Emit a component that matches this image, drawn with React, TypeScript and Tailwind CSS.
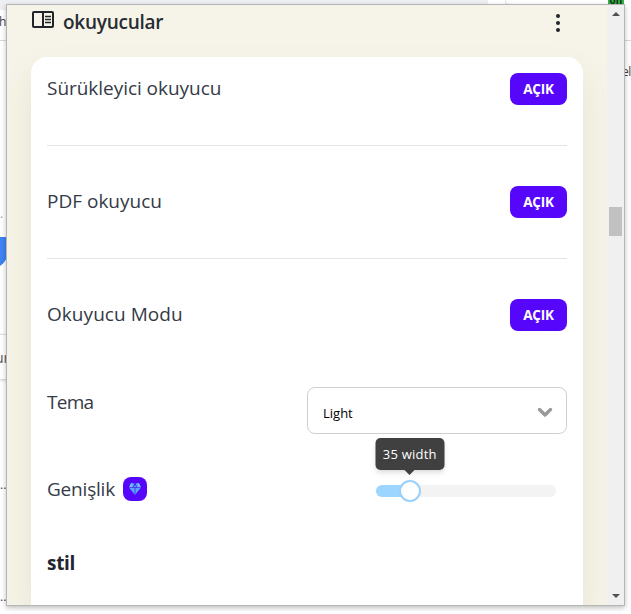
import React, { useState } from "react";

interface Reader {
  id: string;
  label: string;
  labelClass: string;
  rowClass: string;
}

const readers: Reader[] = [
  {
    id: "immersive",
    label: "Sürükleyici okuyucu",
    labelClass: "tracking-[-0.04px]",
    rowClass: "pb-10",
  },
  {
    id: "pdf",
    label: "PDF okuyucu",
    labelClass: "tracking-[0px]",
    rowClass: "py-10",
  },
  {
    id: "mode",
    label: "Okuyucu Modu",
    labelClass: "tracking-[0.05px]",
    rowClass: "pt-10",
  },
];

const MIN_WIDTH = 20;
const MAX_WIDTH = 100;

const ReaderIcon: React.FC = () => (
  <svg width="22" height="17" viewBox="0 0 22 17" fill="none" stroke="#212529">
    <rect x="1" y="1" width="20" height="15" rx="1" strokeWidth="2" />
    <path d="M11 1v15" strokeWidth="2" />
    <path d="M13 5.5h6M13 8.5h6M13 11.5h6" strokeWidth="1.4" />
  </svg>
);

const GemIcon: React.FC = () => (
  <svg width="12" height="12" viewBox="0 0 12 12">
    <path d="M2.2 0h7.6L12 4.4 6 12 0 4.4z" fill="#58a6f8" />
    <path d="M2.2 0L4 4.4H0zM9.8 0L8 4.4h4z" fill="#82c4fb" />
    <path
      d="M0 4.4h12M4 4.4L6 .5l2 3.9M6 4.4V12"
      fill="none"
      stroke="#4424ee"
      strokeWidth="0.8"
    />
    <path d="M4.3 0h3.4L6 3.2z" fill="#4a2af0" />
  </svg>
);

const ToggleButton: React.FC = () => {
  const [enabled, setEnabled] = useState(true);

  return (
    <button
      type="button"
      onClick={() => setEnabled(!enabled)}
      className="h-8 w-[57px] rounded-lg bg-[#5607fb] text-[13.5px] font-bold tracking-[-0.2px] text-white"
    >
      {enabled ? "AÇIK" : "KAPALI"}
    </button>
  );
};

const WidthSlider: React.FC = () => {
  const value = 35;
  const percent = ((value - MIN_WIDTH) / (MAX_WIDTH - MIN_WIDTH)) * 100;

  return (
    <div className="relative mr-[11px] h-3 w-[180px] rounded-full bg-[#f3f3f3]">
      <div
        className="h-3 rounded-full bg-[#9cd5ff]"
        style={{ width: `${percent}%` }}
      />
      <div
        className="absolute top-1/2 size-[22px] -translate-x-1/2 -translate-y-1/2 rounded-full border-2 border-[#9bd0fa] bg-white"
        style={{ left: `${percent}%` }}
      />
      {/* value bubble above the handle */}
      <div
        className="absolute bottom-[27px] flex h-8 w-[69px] -translate-x-1/2 items-center justify-center rounded-[5px] bg-[#404040] pt-px text-[13px] tracking-[0.2px] whitespace-nowrap text-white shadow-md"
        style={{ left: `${percent}%` }}
      >
        {value} width
        <span className="absolute top-full border-x-[5px] border-t-[5px] border-x-transparent border-t-[#404040]" />
      </div>
    </div>
  );
};

// The web page that stays visible around the popup
const PageBehind: React.FC = () => (
  <div className="h-full bg-white text-[12px] text-[#444]">
    <div className="flex h-[10px]">
      <div className="w-[488px] bg-[#edeff2]" />
      <div className="ml-[17px] w-[100px] rounded-bl-lg border-b-[6px] border-l border-[#e3e5e8]" />
    </div>
    <div className="h-[31px] border-b border-[#d5d7da] pt-[2px] leading-5">
      <span className="-ml-[5px] tracking-[-0.5px]">/h</span>
    </div>
    <div className="flex h-[196px] justify-between pt-[22px] leading-5">
      <span className="pt-[141px] text-[#999]">.</span>
      <span className="-mt-px w-[9px] tracking-[-0.6px]">eli</span>
    </div>
    <svg width="8" height="30" viewBox="0 0 8 30">
      <path d="M0 0h8v18Q5 26 0 29z" fill="#3f82f2" />
    </svg>
    <div className="mt-[67px] h-[46px] w-3 border-y border-[#ddd] pt-[11px] leading-6 text-[#555] shadow-sm">
      <span className="-ml-[5px] text-[14px]">ur</span>
    </div>
    <div className="mt-[95px] leading-5">...</div>
    <div className="mt-[92px] leading-5">...</div>
  </div>
);

const App: React.FC = () => {
  return (
    <div className="relative h-[614px] w-[631px] overflow-hidden font-['Open_Sans','Noto_Sans',sans-serif]">
      <PageBehind />
      <span className="absolute top-0 right-[7px] h-[5px] w-4 bg-[#35b34a] text-center text-[10px] leading-[0px] font-bold text-[#15351b]">
        on
      </span>

      <div className="absolute top-1 left-[6px] flex h-[602px] w-[619px] border border-[#b5b5b5] bg-[#f6f4e8] shadow-[0_2px_5px_rgba(0,0,0,0.25)]">
        <main className="flex w-[600px] flex-col overflow-hidden px-6">
          <header className="flex h-[52px] shrink-0 items-start pt-[6px]">
            <span className="ml-[1px]">
              <ReaderIcon />
            </span>
            <h1 className="ml-[9px] text-[19px] leading-[23px] font-semibold tracking-[-0.25px] text-[#272d33]">
              okuyucular
            </h1>
            <button type="button" className="mt-[3px] mr-[23px] ml-auto flex flex-col gap-[3px]">
              <i className="size-1 rounded-full bg-[#212529]" />
              <i className="size-1 rounded-full bg-[#212529]" />
              <i className="size-1 rounded-full bg-[#212529]" />
            </button>
          </header>

          <section className="grow rounded-t-2xl bg-white px-4 pt-4 text-[19px] text-[#343a46] shadow-[0_16px_32px_rgba(100,90,40,0.1)]">
            <div className="divide-y divide-[#e3e4e6]">
              {readers.map(({ id, label, labelClass, rowClass }) => (
                <div key={id} className={`flex items-start justify-between ${rowClass}`}>
                  <span className={`leading-[30px] ${labelClass}`}>{label}</span>
                  <ToggleButton />
                </div>
              ))}
            </div>

            <div className="mt-14 flex items-start justify-between">
              <span className="leading-[30px] tracking-[-0.7px]">Tema</span>
              <button
                type="button"
                className="flex h-[47px] w-[260px] items-center justify-between rounded-lg border border-[#cfcfcf] pt-1 pr-[13px] pl-[15px] text-[13px] text-black"
              >
                <span className="pt-[2px]">Light</span>
                <svg width="16" height="11" viewBox="0 0 16 11" fill="none">
                  <path
                    d="M2.5 2.5L8 8l5.5-5.5"
                    stroke="#999"
                    strokeWidth="3.4"
                    strokeLinecap="round"
                    strokeLinejoin="round"
                  />
                </svg>
              </button>
            </div>

            <div className="mt-10 flex h-[34px] items-center justify-between">
              <div className="-mt-[5px] flex items-center gap-2">
                <span className="leading-[30px] tracking-[-0.2px]">Genişlik</span>
                <span className="flex size-6 items-center justify-center rounded-lg bg-[#5607fb]">
                  <GemIcon />
                </span>
              </div>
              <WidthSlider />
            </div>

            <h2 className="mt-10 leading-[30px] font-bold tracking-[-0.3px] text-[#1f252e]">
              stil
            </h2>
          </section>
        </main>

        <aside className="flex w-[17px] flex-col items-center bg-[#f0f0f0] py-[7px]">
          <span className="border-x-4 border-b-4 border-x-transparent border-b-[#505050]" />
          <span className="mt-[191px] h-[29px] w-[13px] bg-[#c1c1c1]" />
          <span className="mt-auto border-x-4 border-t-4 border-x-transparent border-t-[#505050]" />
        </aside>
      </div>
    </div>
  );
};

export default App;
